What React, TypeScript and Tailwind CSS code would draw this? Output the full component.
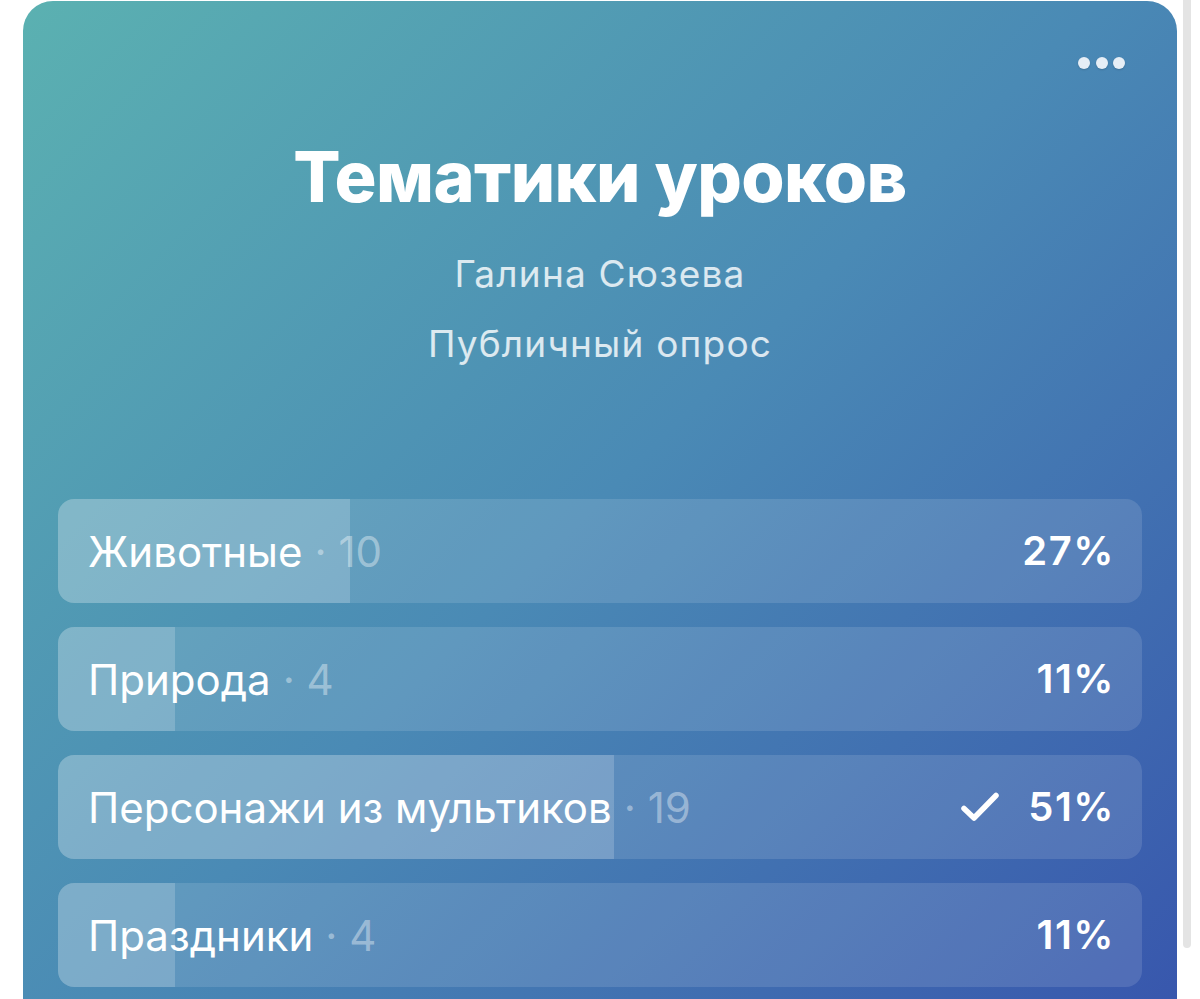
import React from "react";

const options = [
  { label: "Животные", count: 10, pct: 27, checked: false },
  { label: "Природа", count: 4, pct: 11, checked: false },
  { label: "Персонажи из мультиков", count: 19, pct: 51, checked: true },
  { label: "Праздники", count: 4, pct: 11, checked: false },
];

const fills = [292, 117, 556, 117];

export default function App() {
  return (
    <div
      className="flex h-[999px] w-[1200px] overflow-hidden bg-white"
      style={{ fontFamily: "Inter, 'Noto Sans', sans-serif" }}
    >
      <div className="relative ml-[23px] mt-px h-[998px] w-[1154px] shrink-0 overflow-hidden rounded-t-[30px] bg-[linear-gradient(135deg,#5bb1b1_0%,#4a8ab5_50%,#3857ad_100%)]">
        <div className="absolute right-[52px] top-[56px] flex gap-[5.5px]">
          <span className="h-3 w-3 rounded-full bg-[#e6eef6] shadow-[0_1px_2px_rgba(0,0,0,0.15)]" />
          <span className="h-3 w-3 rounded-full bg-[#e6eef6] shadow-[0_1px_2px_rgba(0,0,0,0.15)]" />
          <span className="h-3 w-3 rounded-full bg-[#e6eef6] shadow-[0_1px_2px_rgba(0,0,0,0.15)]" />
        </div>

        <div className="flex flex-col items-center pt-[141px]">
          <h1 className="text-[70px] font-extrabold leading-none tracking-[-0.6px] text-white">
            Тематики уроков
          </h1>
          <div className="mt-[27px] text-[37px] leading-[70px] tracking-[1.2px] text-white/80">
            Галина Сюзева
          </div>
          <div className="text-[37px] leading-[70px] tracking-[1.2px] text-white/80">
            Публичный опрос
          </div>
        </div>

        <div className="mt-[120px] flex flex-col gap-6 px-[35px]">
          {options.map((o, i) => (
            <div
              key={i}
              className="relative flex h-[104px] items-center overflow-hidden rounded-2xl bg-white/[0.12] pl-[30px] pr-[27px]"
            >
              <div
                className="absolute bottom-0 left-0 top-0 bg-white/[0.18]"
                style={{ width: fills[i] }}
              />
              <div className="relative flex flex-1 items-center text-[42px] text-white">
                <span>{o.label}</span>
                <span className="ml-[12px] text-white/40">· {o.count}</span>
              </div>
              {o.checked && (
                <svg
                  className="relative mr-[29px]"
                  width="38"
                  height="30"
                  viewBox="0 0 38 30"
                  fill="none"
                >
                  <path
                    d="M3 16.5 L13 26 L35 3.5"
                    stroke="white"
                    strokeWidth="5.5"
                    strokeLinecap="round"
                    strokeLinejoin="round"
                  />
                </svg>
              )}
              <span className="relative text-[40px] font-semibold tracking-[1.5px] text-white">
                {o.pct}%
              </span>
            </div>
          ))}
        </div>
      </div>
      <div className="ml-[6px] h-[948px] w-2 shrink-0 rounded-b-full bg-[#e4e4e4]" />
    </div>
  );
}
